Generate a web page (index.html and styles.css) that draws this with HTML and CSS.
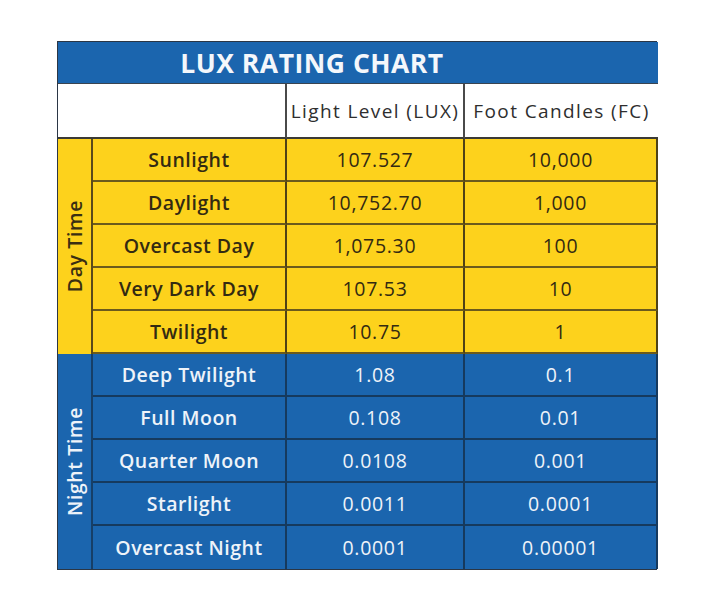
FILE: index.html
```html
<!DOCTYPE html>
<html>
<head>
<meta charset="utf-8">
<link rel="stylesheet" href="styles.css">
</head>
<body>
<div class="chart">
  <div class="title">LUX RATING CHART</div>
  <div class="hcell blank"></div>
  <div class="hcell">Light Level (LUX)</div>
  <div class="hcell last">Foot Candles (FC)</div>

  <div class="side day"><span>Day Time</span></div>
  <div class="cell day label">Sunlight</div><div class="cell day">107.527</div><div class="cell day last">10,000</div>
  <div class="cell day label">Daylight</div><div class="cell day">10,752.70</div><div class="cell day last">1,000</div>
  <div class="cell day label">Overcast Day</div><div class="cell day">1,075.30</div><div class="cell day last">100</div>
  <div class="cell day label">Very Dark Day</div><div class="cell day">107.53</div><div class="cell day last">10</div>
  <div class="cell day label">Twilight</div><div class="cell day">10.75</div><div class="cell day last">1</div>

  <div class="side night"><span>Night Time</span></div>
  <div class="cell night label">Deep Twilight</div><div class="cell night">1.08</div><div class="cell night last">0.1</div>
  <div class="cell night label">Full Moon</div><div class="cell night">0.108</div><div class="cell night last">0.01</div>
  <div class="cell night label">Quarter Moon</div><div class="cell night">0.0108</div><div class="cell night last">0.001</div>
  <div class="cell night label">Starlight</div><div class="cell night">0.0011</div><div class="cell night last">0.0001</div>
  <div class="cell night label bottom">Overcast Night</div><div class="cell night bottom">0.0001</div><div class="cell night last bottom">0.00001</div>
</div>
</body>
</html>
```

FILE: styles.css
```css
html, body {
  margin: 0;
  padding: 0;
  background: #ffffff;
}
body {
  padding: 41px 0 0 57px;
  font-family: "Open Sans", "Liberation Sans", sans-serif;
}
.chart {
  display: grid;
  grid-template-columns: 35px 194px 178px 193px;
  grid-template-rows: 42px 55px repeat(10, 43px);
  width: 600px;
  box-sizing: border-box;
  border: 1px solid #2b3645;
}
.title {
  grid-column: 1 / -1;
  background: #1b65ae;
  color: #f4f7fb;
  font-weight: 700;
  font-size: 26.5px;
  letter-spacing: 0.5px;
  display: flex;
  align-items: center;
  justify-content: center;
  padding-right: 92px;
  border-bottom: 1px solid #3a4450;
}
.hcell {
  background: #ffffff;
  color: #2e2e2e;
  font-size: 19px;
  font-weight: 500;
  display: flex;
  align-items: center;
  justify-content: center;
  border-right: 2px solid #4a4a4a;
  border-bottom: 2px solid #3b3a35;
  white-space: nowrap;
  letter-spacing: 1.4px;
}
.hcell.blank {
  grid-column: 1 / 3;
}
.hcell.last, .cell.last {
  border-right: none;
}
.side {
  grid-column: 1;
  display: flex;
  align-items: center;
  justify-content: center;
  font-size: 19.5px;
  font-weight: 600;
  letter-spacing: 0.6px;
}
.side span {
  writing-mode: vertical-rl;
  transform: rotate(180deg);
  white-space: nowrap;
}
.side.day {
  grid-row: 3 / 8;
  background: #fdd21c;
  color: #3a2f12;
  border-right: 2px solid #5a4a1a;
}
.side.night {
  grid-row: 8 / 13;
  background: #1b65ae;
  color: #eef3f9;
  border-right: 2px solid #163f68;
}
.cell {
  display: flex;
  align-items: center;
  justify-content: center;
  font-size: 19.5px;
  font-weight: 500;
  letter-spacing: 0.7px;
  white-space: nowrap;
  box-sizing: border-box;
}
.cell.label {
  font-weight: 600;
  letter-spacing: 0.5px;
}
.cell.day {
  background: #fdd21c;
  color: #332a12;
  border-right: 2px solid #4f4216;
  border-bottom: 2px solid #6b5a1c;
}
.cell.night {
  background: #1b65ae;
  color: #eef3f9;
  border-right: 2px solid #163a5e;
  border-bottom: 2px solid #163a5e;
}
.cell.bottom {
  border-bottom: none;
}
```
